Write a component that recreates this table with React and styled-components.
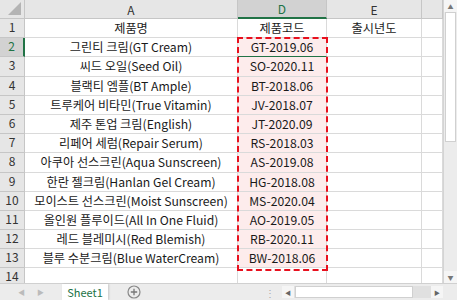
import React from 'react';
import styled, { createGlobalStyle, css } from 'styled-components';

const GlobalStyle = createGlobalStyle`
  html, body {
    margin: 0;
    padding: 0;
    background: #ffffff;
    overflow: hidden;
  }
  body {
    font-family: "Noto Sans CJK KR", "Noto Sans", sans-serif;
  }
`;

const GREEN = '#217346';
const GRID = '#dadada';

const rows = [
  ['그린티 크림(GT Cream)', 'GT-2019.06'],
  ['씨드 오일(Seed Oil)', 'SO-2020.11'],
  ['블랙티 엠플(BT Ample)', 'BT-2018.06'],
  ['트루케어 비타민(True Vitamin)', 'JV-2018.07'],
  ['제주 톤업 크림(English)', 'JT-2020.09'],
  ['리페어 세럼(Repair Serum)', 'RS-2018.03'],
  ['아쿠아 선스크린(Aqua Sunscreen)', 'AS-2019.08'],
  ['한란 젤크림(Hanlan Gel Cream)', 'HG-2018.08'],
  ['모이스트 선스크린(Moist Sunscreen)', 'MS-2020.04'],
  ['올인원 플루이드(All In One Fluid)', 'AO-2019.05'],
  ['레드 블레미시(Red Blemish)', 'RB-2020.11'],
  ['블루 수분크림(Blue WaterCream)', 'BW-2018.06'],
];

const Sheet = styled.div`
  width: 457px;
  height: 300px;
  display: flex;
  flex-direction: column;
  overflow: hidden;
`;

const Main = styled.div`
  flex: 0 0 283px;
  display: flex;
  overflow: hidden;
`;

/* last row is only partly on screen, as in the window */
const Grid = styled.div`
  position: relative;
  width: 443px;
  display: grid;
  grid-template-columns: 25px 213px 89px 95px 21px;
  grid-template-rows: 19px repeat(13, 19.2px) 14.4px;
  align-content: start;
  overflow: hidden;
`;

const Corner = styled.div`
  background: #e6e6e6;
  border-right: 1px solid #c6c6c6;
  border-bottom: 1px solid #c6c6c6;
  position: relative;
  &::after {
    content: '';
    position: absolute;
    right: 3px;
    bottom: 3px;
    width: 0;
    height: 0;
    border-left: 13px solid transparent;
    border-bottom: 13px solid #b4b4b4;
  }
`;

const ColHead = styled.div`
  background: ${p => (p.$active ? '#d2d2d2' : '#e6e6e6')};
  color: ${p => (p.$active ? GREEN : '#333')};
  border-right: 1px solid #c6c6c6;
  border-bottom: ${p => (p.$active ? `2px solid ${GREEN}` : '1px solid #c6c6c6')};
  font-size: 12px;
  display: flex;
  align-items: center;
  justify-content: center;
  box-sizing: border-box;
`;

const RowHead = styled.div`
  background: ${p => (p.$active ? '#d2d2d2' : '#e6e6e6')};
  color: ${p => (p.$active ? GREEN : '#333')};
  border-right: ${p => (p.$active ? `2px solid ${GREEN}` : '1px solid #c6c6c6')};
  border-bottom: ${p => (p.$cut ? 'none' : '1px solid #c6c6c6')};
  font-size: 12px;
  line-height: 10px;
  padding-top: ${p => (p.$cut ? '3px' : '0')};
  padding-bottom: 2px;
  display: flex;
  align-items: ${p => (p.$cut ? 'flex-start' : 'center')};
  justify-content: center;
  box-sizing: border-box;
`;

const Cell = styled.div`
  border-right: 1px solid ${GRID};
  border-bottom: 1px solid ${GRID};
  box-sizing: border-box;
  font-size: 12.2px;
  color: #1a1a1a;
  display: flex;
  align-items: center;
  justify-content: center;
  white-space: nowrap;
  overflow: visible;
  ${p => p.$copied && css`background: #fdecec;`}
  ${p => p.$current && css`border-bottom: 1px solid ${GREEN};`}
  ${p => p.$cut && css`border-bottom: none;`}
`;

const Marquee = styled.div`
  position: absolute;
  left: 237px;
  top: 37px;
  width: 91px;
  height: 234px;
  box-sizing: border-box;
  border: 2px dashed #e8101e;
  pointer-events: none;
`;

const VScroll = styled.div`
  width: 14px;
  background: #ececec;
  border-left: 1px solid #d4d4d4;
  box-sizing: border-box;
  display: flex;
  flex-direction: column;
`;

const ScrollBtn = styled.div`
  height: 12px;
  background: #f5f5f5;
  display: flex;
  align-items: center;
  justify-content: center;
  font-size: 6px;
  color: #777;
`;

const VThumb = styled.div`
  height: 130px;
  background: #ffffff;
  border: 1px solid #d0d0d0;
  box-sizing: border-box;
  margin: 0 1px;
`;

const VTrack = styled.div`
  flex: 1;
`;

const Bottom = styled.div`
  flex: 1;
  display: flex;
  align-items: stretch;
  background: #ececec;
  border-top: 1px solid #d0d0d0;
  box-sizing: border-box;
`;

const NavArrows = styled.div`
  width: 62px;
  display: flex;
  align-items: center;
  justify-content: center;
  gap: 12px;
  font-size: 7px;
  color: #bbb;
`;

const Tab = styled.div`
  width: 46px;
  background: #ffffff;
  color: ${GREEN};
  font-size: 11px;
  display: flex;
  align-items: center;
  justify-content: center;
  box-shadow: 1px 0 2px rgba(0, 0, 0, 0.15);
`;

const AddSheet = styled.div`
  width: 52px;
  display: flex;
  align-items: center;
  justify-content: center;
`;

const Dots = styled.div`
  width: 122px;
  display: flex;
  align-items: center;
  justify-content: flex-end;
  color: #aaa;
  font-size: 10px;
  padding-right: 7px;
  box-sizing: border-box;
`;

const HScroll = styled.div`
  flex: 1;
  display: flex;
  align-items: center;
  padding: 2px 0;
`;

const HBar = styled.div`
  flex: 1;
  height: 12px;
  display: flex;
  align-items: stretch;
  background: #e0e0e0;
`;

const HBtn = styled.div`
  width: 12px;
  background: #f5f5f5;
  display: flex;
  align-items: center;
  justify-content: center;
  font-size: 6px;
  color: #666;
`;

const HThumb = styled.div`
  width: 118px;
  background: #ffffff;
  border: 1px solid #d0d0d0;
  box-sizing: border-box;
  margin: 0 1px;
`;

const HTrack = styled.div`
  flex: 1;
`;

const CornerBox = styled.div`
  width: 14px;
`;

function PlusIcon() {
  return (
    <svg width="14" height="14" viewBox="0 0 14 14">
      <circle cx="7" cy="7" r="6" fill="none" stroke="#888" strokeWidth="1.2" />
      <path d="M7 3.8v6.4M3.8 7h6.4" stroke="#777" strokeWidth="1.3" />
    </svg>
  );
}

export default function App() {
  return (
    <Sheet>
      <GlobalStyle />
      <Main>
        <Grid>
          <Corner />
          <ColHead>A</ColHead>
          <ColHead $active>D</ColHead>
          <ColHead>E</ColHead>
          <ColHead />

          <RowHead>1</RowHead>
          <Cell>제품명</Cell>
          <Cell>제품코드</Cell>
          <Cell>출시년도</Cell>
          <Cell />

          {rows.map((r, i) => (
            <React.Fragment key={r[1]}>
              <RowHead $active={i === 0}>{i + 2}</RowHead>
              <Cell>{r[0]}</Cell>
              <Cell $copied $current={i === 0}>{r[1]}</Cell>
              <Cell />
              <Cell />
            </React.Fragment>
          ))}

          <RowHead $cut>14</RowHead>
          <Cell $cut />
          <Cell $cut />
          <Cell $cut />
          <Cell $cut />

          <Marquee />
        </Grid>
        <VScroll>
          <ScrollBtn>▲</ScrollBtn>
          <VThumb />
          <VTrack />
          <ScrollBtn>▼</ScrollBtn>
        </VScroll>
      </Main>
      <Bottom>
        <NavArrows>
          <span>◀</span>
          <span>▶</span>
        </NavArrows>
        <Tab>Sheet1</Tab>
        <AddSheet>
          <PlusIcon />
        </AddSheet>
        <Dots>⋮</Dots>
        <HScroll>
          <HBar>
            <HBtn>◀</HBtn>
            <HThumb />
            <HTrack />
            <HBtn>▶</HBtn>
          </HBar>
        </HScroll>
        <CornerBox />
      </Bottom>
    </Sheet>
  );
}
